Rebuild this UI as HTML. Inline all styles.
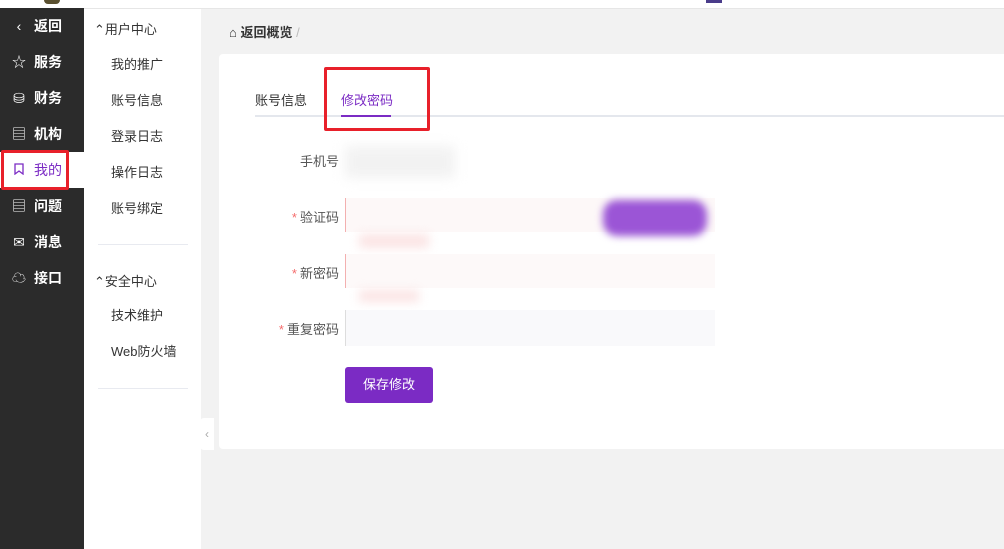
<!DOCTYPE html>
<html><head><meta charset="utf-8"><style>
*{margin:0;padding:0;box-sizing:border-box}
body{width:1004px;height:549px;overflow:hidden;background:#f2f2f2;font-family:"Liberation Sans","Noto Sans CJK SC",sans-serif;font-size:13px;position:relative;color:#333}
.top{position:absolute;left:0;top:0;width:1004px;height:9px;background:#fff;border-bottom:1px solid #e6e6e6}
.side{position:absolute;left:0;top:8px;width:84px;height:541px;background:#2b2b2b}
.side div{height:36px;display:flex;align-items:center;padding-left:12px;color:#fff;font-weight:bold;font-size:14px}
.side div span.i{width:14px;display:inline-block;margin-right:8px;text-align:center;font-weight:normal}
.side div.act{background:#fff;color:#7b2bc4;font-weight:normal}
.redbox{position:absolute;border:3px solid #e8202a;border-radius:2px}
.sub{position:absolute;left:84px;top:9px;width:117px;height:540px;background:#fff}
.sub .h{position:absolute;left:10px;color:#333;font-size:13px}
.sub .it{position:absolute;left:27px;font-size:13px;color:#333}
.sub hr{position:absolute;left:14px;width:90px;border:none;border-top:1px solid #e8eaf0}
.card{position:absolute;left:219px;top:54px;width:790px;height:395px;background:#fff;border-radius:4px}
.lbl{position:absolute;right:670px;font-size:13px;color:#555;text-align:right}
.lbl b{color:#f56c6c;font-weight:normal;margin-right:3px}
</style></head><body>
<div class="top"><div style="position:absolute;left:44px;top:0;width:16px;height:4px;background:#5a5030;border-radius:0 0 8px 8px"></div><div style="position:absolute;left:706px;top:0;width:16px;height:3px;background:#4a3c8a"></div></div>
<div class="side">
<div><span class="i">‹</span>返回</div>
<div><span class="i">☆</span>服务</div>
<div><span class="i">⛁</span>财务</div>
<div><span class="i">▤</span>机构</div>
<div class="act"><span class="i"><svg width="10" height="12" viewBox="0 0 10 12"><path d="M1 1h8v10L5 8 1 11z" fill="none" stroke="#7b2bc4" stroke-width="1.3"/></svg></span>我的</div>
<div><span class="i">▤</span>问题</div>
<div><span class="i">✉</span>消息</div>
<div><span class="i">☁</span>接口</div>
</div>
<div class="redbox" style="left:1px;top:150px;width:68px;height:40px"></div>
<div class="sub">
<div class="h" style="top:10px">⌃用户中心</div>
<div class="it" style="top:45px">我的推广</div>
<div class="it" style="top:81px">账号信息</div>
<div class="it" style="top:117px">登录日志</div>
<div class="it" style="top:153px">操作日志</div>
<div class="it" style="top:189px">账号绑定</div>
<hr style="top:235px">
<div class="h" style="top:262px">⌃安全中心</div>
<div class="it" style="top:296px">技术维护</div>
<div class="it" style="top:332px">Web防火墙</div>
<hr style="top:379px">
</div>
<div style="position:absolute;left:200px;top:418px;width:14px;height:32px;background:#fff;border-radius:4px 0 0 4px;color:#aaa;font-size:12px;line-height:32px;text-align:center">‹</div>
<div style="position:absolute;left:229px;top:22px;font-size:13px;font-weight:bold;color:#333">⌂ 返回概览 <span style="color:#bbb;font-weight:normal">/</span></div>
<div class="card">
<div style="position:absolute;left:36px;top:36px;color:#333">账号信息</div>
<div style="position:absolute;left:122px;top:36px;color:#7b2bc4">修改密码</div>
<div style="position:absolute;left:36px;top:61px;width:760px;height:2px;background:#e4e7ed"></div>
<div style="position:absolute;left:122px;top:61px;width:50px;height:2px;background:#7b2bc4"></div>
<div class="lbl" style="top:97px">手机号</div>
<div class="lbl" style="top:153px"><b>*</b>验证码</div>
<div class="lbl" style="top:209px"><b>*</b>新密码</div>
<div class="lbl" style="top:265px"><b>*</b>重复密码</div>
<div style="position:absolute;left:126px;top:92px;width:110px;height:32px;background:#f2f2f2;filter:blur(6px)"></div>
<div style="position:absolute;left:126px;top:144px;width:370px;height:34px;background:#fdf8f8;border-left:1px solid #f3b0b0"></div>
<div style="position:absolute;left:140px;top:180px;width:70px;height:14px;background:#fbe4e4;filter:blur(5px)"></div>
<div style="position:absolute;left:384px;top:146px;width:104px;height:36px;background:#9b55d6;border-radius:14px;filter:blur(4px)"></div>
<div style="position:absolute;left:126px;top:200px;width:370px;height:34px;background:#fdf9f9;border-left:1px solid #f3b0b0"></div>
<div style="position:absolute;left:140px;top:236px;width:60px;height:12px;background:#fbe4e4;filter:blur(5px)"></div>
<div style="position:absolute;left:126px;top:256px;width:370px;height:36px;background:#f9f9fb;border-left:1px solid #ddd"></div>
<div style="position:absolute;left:126px;top:313px;width:88px;height:36px;background:#7b2bc4;border-radius:3px;color:#fff;text-align:center;line-height:36px">保存修改</div>
</div>
<div class="redbox" style="left:324px;top:67px;width:106px;height:64px"></div>
</body></html>
